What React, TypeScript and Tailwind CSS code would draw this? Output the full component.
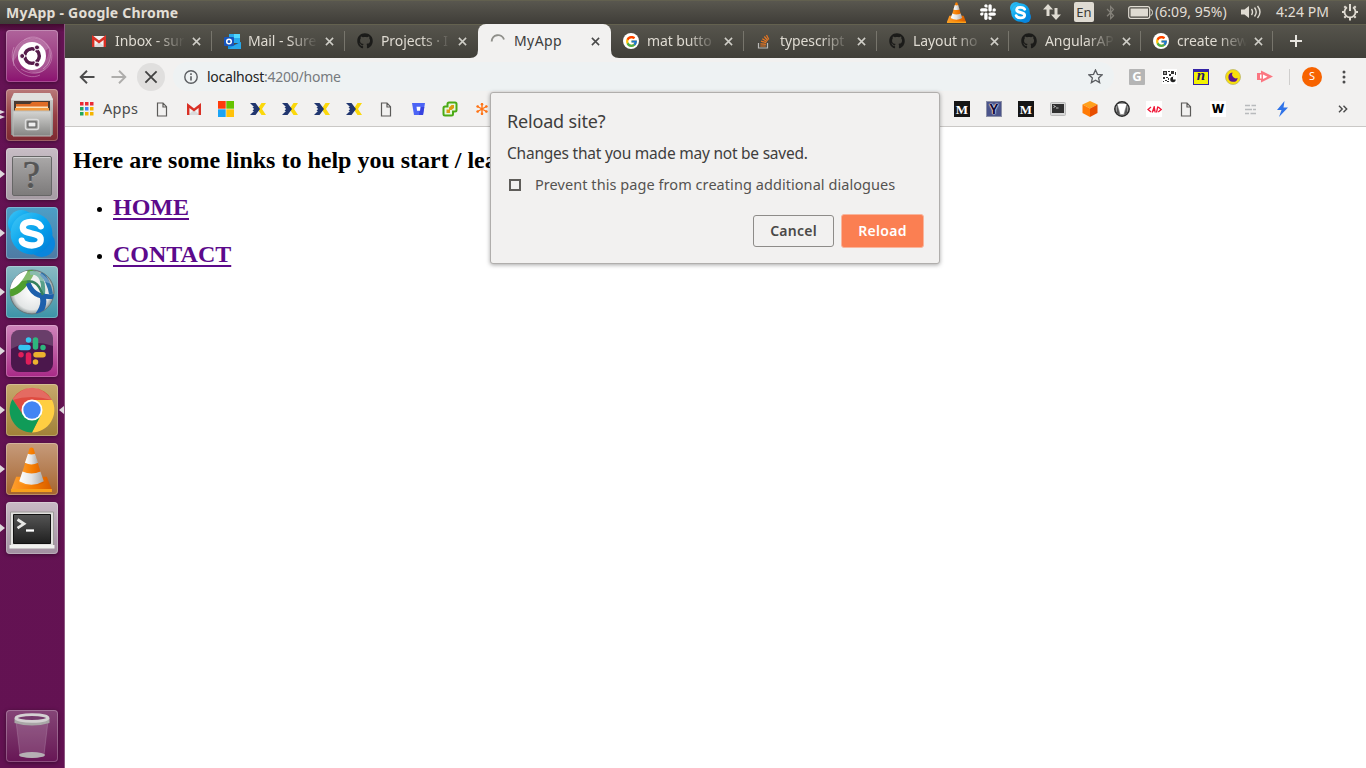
import React from "react";
import { FaGithub, FaSlack, FaBluetoothB } from "react-icons/fa";
import { FcGoogle } from "react-icons/fc";

type Kids = { children?: React.ReactNode };

const Vlc = ({ size = 20 }: { size?: number }) => (
  <svg width={size} height={size} viewBox="-2 0 44 44">
    <defs>
      <linearGradient id="cone" x1="0" x2="1">
        <stop offset="0" stopColor="#ffa030" />
        <stop offset=".55" stopColor="#f57c00" />
        <stop offset="1" stopColor="#d65c00" />
      </linearGradient>
      <linearGradient id="cloth" x1="0" x2="1">
        <stop offset="0" stopColor="#fff" />
        <stop offset=".5" stopColor="#e4e4e4" />
        <stop offset="1" stopColor="#a8a8a8" />
      </linearGradient>
    </defs>
    <path d="M5 29h30l5 13H0z" fill="url(#cone)" />
    <path d="M0 41h40v3H0z" fill="#f9a01c" />
    <path d="M18 1.500q2-2 4 0L32 35q-12 7-24 0z" fill="url(#cone)" />
    <path d="M16.500 6.500q3.500 1.500 7 0l2.900 9q-6.400 3-12.800 0z" fill="url(#cloth)" />
    <path d="M11.200 24q8.800 4 17.600 0L32 33.500q-12 7-24 0z" fill="url(#cloth)" />
  </svg>
);

const SkypeMark = ({ size = 20 }: { size?: number }) => (
  <svg width={size} height={size} viewBox="0 0 46 46">
    <defs>
      <linearGradient id="sky" x1="0" y1="0" x2="1" y2="1">
        <stop offset="0" stopColor="#44c8f5" />
        <stop offset=".5" stopColor="#08a4ee" />
        <stop offset="1" stopColor="#0078d4" />
      </linearGradient>
    </defs>
    <circle cx="13" cy="13" r="13" fill="url(#sky)" />
    <circle cx="33" cy="33" r="13" fill="#0a85dd" />
    <circle cx="23" cy="23" r="20.500" fill="url(#sky)" />
    <path d="M32 16C30 11 15 9 14.500 17c-.5 8 18 4 17.500 12 0 8-17 7-18.500 1" fill="none" stroke="#fff" strokeWidth="6.200" strokeLinecap="round" />
  </svg>
);

const Gmail = () => (
  <svg width="16" height="16" viewBox="0 0 16 16">
    <path d="M2 3h12v11H2z" fill="#f2f2f2" />
    <path d="M2 14l6-5 6 5z" fill="#dadada" />
    <path d="M2.200 14V4.500L8 9l5.800-4.500V14" fill="none" stroke="#d93025" strokeWidth="2.400" />
  </svg>
);

const Outlook = () => (
  <svg width="17" height="17" viewBox="0 0 17 17">
    <path d="M5 1h11v9H5z" fill="#28a8ea" />
    <path d="M10 1h6v4h-6z" fill="#50d9ff" />
    <path d="M4 9l6 3 7-3v7H4z" fill="#1490df" />
    <path d="M4 16l13-7v7z" fill="#28a8ea" />
    <rect x="0" y="4" width="10" height="9" rx="1" fill="#1755bd" />
    <circle cx="5" cy="8.500" r="2.300" fill="none" stroke="#fff" strokeWidth="1.500" />
  </svg>
);

const Octo = () => <FaGithub size={16} color="#1b1b19" />;

const Goog = () => (
  <span className="flex size-4 items-center justify-center rounded-full bg-white">
    <FcGoogle size={13} />
  </span>
);

const Stack = () => (
  <svg width="16" height="16" viewBox="0 0 16 16" fill="none">
    <path d="M2.500 10v5h9v-5" stroke="#bcbbb8" strokeWidth="1.200" />
    <path d="M4.300 13h5.500M4.400 10.800l5.500.6M5 8.200l5.300 1.500M6.300 5.700l4.700 2.800M8.300 3.500l3.500 4M10.500 2l2.300 4.500" stroke="#e87722" strokeWidth="1.200" />
  </svg>
);

const Spinner = () => (
  <svg width="16" height="16" viewBox="0 0 16 16" fill="none">
    <path d="M1.700 8.500A6.300 6.300 0 0 1 14 6.500" stroke="#8f8f8a" strokeWidth="1.900" />
  </svg>
);

const Cross = ({ size = 9, color = "#cfcec7", width = 1.7 }: { size?: number; color?: string; width?: number }) => (
  <svg width={size} height={size} viewBox="0 0 10 10" fill="none">
    <path d="M1 1l8 8M9 1l-8 8" stroke={color} strokeWidth={width} />
  </svg>
);

const tabs: { icon: React.ReactNode; label: string; width: string; sep?: boolean; active?: boolean }[] = [
  { icon: <Gmail />, label: "Inbox - sur", width: "w-[133px]", sep: true },
  { icon: <Outlook />, label: "Mail - Sure", width: "w-[133px]", sep: true },
  { icon: <Octo />, label: "Projects · I", width: "w-[133px]" },
  { icon: <Spinner />, label: "MyApp", width: "w-[133px]", active: true },
  { icon: <Goog />, label: "mat butto", width: "w-[133px]", sep: true },
  { icon: <Stack />, label: "typescript", width: "w-[133px]", sep: true },
  { icon: <Octo />, label: "Layout no", width: "w-[132px]", sep: true },
  { icon: <Octo />, label: "AngularAP", width: "w-[132px]", sep: true },
  { icon: <Goog />, label: "create new", width: "w-[132px]", sep: true },
];

const Tab = ({ icon, label, width, sep, active }: (typeof tabs)[number]) => (
  <div
    className={`relative flex h-[34px] shrink-0 items-center pl-[12px] ${width} ${
      active ? "rounded-t-[8px] bg-[#f2f1f0] text-[#3c3c3c]" : "text-[#dfdbd2]"
    }`}
  >
    {active && (
      <>
        <svg className="absolute bottom-0 -left-2" width="8" height="8" viewBox="0 0 8 8"><path d="M8 0v8H0q8 0 8-8" fill="#f2f1f0" /></svg>
        <svg className="absolute -right-2 bottom-0" width="8" height="8" viewBox="0 0 8 8"><path d="M0 0v8h8Q0 8 0 0" fill="#f2f1f0" /></svg>
      </>
    )}
    <span className="flex w-6 shrink-0">{icon}</span>
    <span
      className={
        active
          ? "w-[70px] pb-px text-[14px] tracking-[0.400px]"
          : "w-[70px] overflow-hidden pb-px text-[14px] whitespace-nowrap tracking-[-0.100px] [mask-image:linear-gradient(to_right,black_58%,transparent_100%)]"
      }
    >
      {label}
    </span>
    <span className="ml-[7px] flex"><Cross color={active ? "#4a4a4a" : "#cfcec7"} /></span>
    {sep && <span className="ml-auto h-5 w-px bg-[#77756c]" />}
  </div>
);

const Slot = ({ children }: Kids) => <span className="flex w-8 shrink-0 items-center justify-center">{children}</span>;

const Page = () => (
  <svg width="12" height="15" viewBox="0 0 12 15" fill="none">
    <path d="M1.500 1h5.500l3.500 3.700V14h-9zM7 1v4h3.500" stroke="#5c5b59" strokeWidth="1.200" />
  </svg>
);

const Chevrons = () => (
  <svg width="16" height="12" viewBox="0 0 16 12">
    <path d="M11.500 0H16l-4 6 4 6h-4.500L7.500 6z" fill="#fbd80b" />
    <path d="M0 0h5.500L10 6l-4.500 6H0l4-4H2.500l1.500-2-1.500-2H4z" fill="#21366f" />
  </svg>
);

const Medium = () => (
  <span className="flex size-4 items-center justify-center bg-[#151515] font-['Liberation_Serif',serif] text-[13px] leading-none font-bold text-white">M</span>
);

const WindowsMark = () => (
  <svg width="16" height="16" viewBox="0 0 16 16">
    <path d="M0 0h7.700v7.700H0z" fill="#ff3b0b" />
    <path d="M8.300 0H16v7.700H8.300z" fill="#66c300" />
    <path d="M0 8.300h7.700V16H0z" fill="#1aa3f5" />
    <path d="M8.300 8.300H16V16H8.300z" fill="#ffc20a" />
  </svg>
);

const Bookmarks = () => (
  <div className="flex h-[35px] items-center border-b border-[#cac8c6] pl-[15px]">
    <svg width="14" height="14" viewBox="0 0 14 14">
      {["#ea2a35", "#ea2a35", "#ea2a35", "#21a65b", "#4285f4", "#f4b400", "#21a65b", "#f4b400", "#f4b400"].map((c, i) => (
        <rect key={i} x={(i % 3) * 5} y={Math.floor(i / 3) * 5} width="3.500" height="3.500" fill={c} />
      ))}
    </svg>
    <span className="ml-[9px] w-[43px] pb-px text-[14.500px] tracking-[0.300px] text-[#4a4a4a]">Apps</span>
    <Slot><Page /></Slot>
    <Slot><Gmail /></Slot>
    <Slot><WindowsMark /></Slot>
    <Slot><Chevrons /></Slot>
    <Slot><Chevrons /></Slot>
    <Slot><Chevrons /></Slot>
    <Slot><Chevrons /></Slot>
    <Slot><Page /></Slot>
    <Slot>
      <svg width="13" height="12" viewBox="0 0 13 12"><path d="M0 0h13l-2 12H2z" fill="#4c64f5" /><path d="M8 4h4.300L11 12H7z" fill="#3742df" /><path d="M4.500 3.800h4L8 7.700H5z" fill="#fff" /></svg>
    </Slot>
    <Slot>
      <svg width="16" height="16" viewBox="0 0 16 16"><path d="M7 1.500h6q1.500 0 1.500 1.500v6q0 1.500-1.500 1.500h-2V13q0 1.500-1.500 1.500H3Q1.500 14.500 1.500 13V7Q1.500 5.500 3 5.500h2.500V3q0-1.500 1.500-1.500z" fill="#e8f7df" stroke="#4aaa15" strokeWidth="2" /><path d="M4.500 12V8.500H7V6.500L9.500 4h2.500v3L9.500 9H8v3z" fill="#dc9b13" /></svg>
    </Slot>
    <Slot>
      <svg width="12" height="12" viewBox="0 0 12 12" stroke="#ff7416" strokeWidth="1.400"><path d="M6 0v12M.8 3l10.400 6M.8 9l10.400-6" /><g fill="#ff7416" stroke="none"><circle cx="6" cy="1.300" r="1.300" /><circle cx="6" cy="10.700" r="1.300" /><circle cx="1.700" cy="3.500" r="1.300" /><circle cx="10.300" cy="3.500" r="1.300" /><circle cx="1.700" cy="8.500" r="1.300" /><circle cx="10.300" cy="8.500" r="1.300" /></g></svg>
    </Slot>
    <span className="w-[448px] shrink-0" />
    <Slot><Medium /></Slot>
    <Slot>
      <span className="flex size-4 items-center justify-center border border-[#8c90a7] bg-[#4b548b] text-[14px] leading-none font-bold text-[#120d3a] [text-shadow:0_0_1px_#fff,0_0_1px_#fff,0_0_2px_#fff]">Y</span>
    </Slot>
    <Slot><Medium /></Slot>
    <Slot>
      <svg width="16" height="14" viewBox="0 0 16 14"><rect x=".5" y=".5" width="15" height="13" rx="1" fill="#d7d7d7" stroke="#bbb" /><path d="M2 2h12v9H2z" fill="#303030" /><path d="M3.500 3.500l2 1-2 1M6 6h2.500" stroke="#ddd" strokeWidth=".8" fill="none" /></svg>
    </Slot>
    <Slot>
      <svg width="16" height="16" viewBox="0 0 16 16"><path d="M8 0l7.500 3.500L8 7.500.5 3.500z" fill="#ffa01c" /><path d="M.5 3.500L8 7.500V16L.5 12z" fill="#ff7a05" /><path d="M15.500 3.500L8 7.500V16l7.500-4z" fill="#e84e00" /></svg>
    </Slot>
    <Slot>
      <svg width="16" height="16" viewBox="0 0 16 16"><circle cx="8" cy="8" r="7.200" fill="#9b9b9b" stroke="#2a2a2a" strokeWidth="1.500" /><path d="M3.500 3h9L9.500 13h-3z" fill="#fff" /><path d="M3 3.500v9l3 1.500zM13 3.500v9l-3 1.500z" fill="#555" /></svg>
    </Slot>
    <Slot>
      <span className="flex size-4 items-center justify-center bg-white">
        <svg width="15" height="7" viewBox="0 0 15 7" fill="none" stroke="#f01838" strokeWidth="1.300"><path d="M4 1L1 3.500 4 6M5.200 6.500L7.200.8l1 5.700M6 4.500h2.500M10.800.5L9.500 6.500M11.200 1l3 2.500-3 2.500" /></svg>
      </span>
    </Slot>
    <Slot><Page /></Slot>
    <Slot><span className="flex size-4 items-center justify-center bg-white text-[12px] leading-none font-black text-black">W</span></Slot>
    <Slot>
      <svg width="11" height="11" viewBox="0 0 11 11" stroke="#b8babc" strokeWidth="1.700"><path d="M0 1.500h5M6.500 1.500H11M0 5.500h7M8 5.500h3M0 9.500h4M5.500 9.500H11" /></svg>
    </Slot>
    <Slot>
      <svg width="13" height="16" viewBox="0 0 13 16"><path d="M8.500 0L1 9h4.500L3 16l9-9.500H7.500z" fill="#2f73e8" /></svg>
    </Slot>
    <svg className="ml-10" width="10" height="8" viewBox="0 0 10 8" fill="none" stroke="#494949" strokeWidth="1.400"><path d="M1 .8L4.200 4 1 7.200M5.500.8L8.700 4 5.500 7.200" /></svg>
  </div>
);

const Toolbar = () => (
  <div className="flex h-[34px] items-center pt-[3px]">
    <span className="flex w-8 justify-end pr-[2px]">
      <svg width="16" height="14" viewBox="0 0 16 14" fill="none" stroke="#4c4c4c" strokeWidth="1.900"><path d="M15.500 7H2M8 .8L1.700 7 8 13.200" /></svg>
    </span>
    <span className="flex w-8 justify-end pr-[2px]">
      <svg width="16" height="14" viewBox="0 0 16 14" fill="none" stroke="#aeadab" strokeWidth="1.900"><path d="M.5 7H14M8 .8L14.300 7 8 13.200" /></svg>
    </span>
    <span className="ml-2 flex size-7 items-center justify-center rounded-full bg-[#e0dfde]"><Cross size={14} color="#414141" width={1.3} /></span>
    <div className="ml-2 flex h-[29px] w-[941px] items-center rounded-full bg-[#eef2f3] pr-[11px] pl-[11px]">
      <svg width="14" height="14" viewBox="0 0 14 14" fill="none" stroke="#5b5e62" strokeWidth="1.400"><circle cx="7" cy="7" r="6.200" /><path d="M7 6.200v4.300M7 3.300v1.600" strokeWidth="1.600" /></svg>
      <span className="ml-[9px] text-[14px] tracking-[-0.240px] text-[#767a7e]"><span className="text-[#222]">localhost</span>:4200/home</span>
      <svg className="ml-auto" width="15" height="15" viewBox="0 0 16 16" fill="none" stroke="#5b5e62" strokeWidth="1.400"><path d="M8 1l2.100 4.700 5 .5-3.800 3.400 1.100 5L8 12l-4.400 2.600 1.100-5L.9 6.200l5-.5z" /></svg>
    </div>
    <div className="ml-[7px] flex items-center">
      <Slot><span className="flex size-4 items-center justify-center rounded-[1px] bg-[#b5b5b5] text-[13px] leading-none font-bold text-white">G</span></Slot>
      <Slot>
        <svg width="15" height="15" viewBox="0 0 15 15"><path d="M0 0h15v15H0z" fill="#fff" /><path d="M1 2h4v4H1zM6 2h2v1H6zM9 2h3v3H9zM7 5h2v2H7zM13 3h1v3h-1zM1 8h2v2H1zM4 8h2v1H4zM6 9h1v2H6zM3 11h2v1H3zM1 12h1v1H1zM5 12h2v1H5z" fill="#333" /><path d="M2.300 3.300h1.400v1.400H2.300z" fill="#fff" /><circle cx="11" cy="10.500" r="2.700" fill="#222" /><path d="M11 10.500V8h3v2.500z" fill="#fff" /></svg>
      </Slot>
      <Slot>
        <span className="flex size-4 items-center justify-center border-[1.500px] border-t-[3px] border-[#3423a6] bg-[#f2f205] font-['Liberation_Serif',serif] text-[15px] leading-none font-bold text-[#241769] italic"><span className="-mt-1">n</span></span>
      </Slot>
      <Slot>
        <svg width="16" height="16" viewBox="0 0 16 16"><circle cx="8" cy="8" r="7.500" fill="#f8df0b" stroke="#bdb76a" strokeWidth=".8" /><path d="M7.500 3.500A4.700 4.700 0 1 0 12.700 9 4 4 0 0 1 7.500 3.500" fill="#5b1690" /></svg>
      </Slot>
      <Slot>
        <svg width="16" height="13" viewBox="0 0 16 13"><path d="M0 3h4V.5L16 6.500 4 12.500V10H0z" fill="#fb7681" /><path d="M6 4.500v4.500l4.500-2.300zM3 4.500h1.500v4H3z" fill="#fff" /></svg>
      </Slot>
      <span className="ml-2 h-4 w-px bg-[#cfcecd]" />
      <span className="ml-3 flex size-5 items-center justify-center rounded-full bg-[#f76300] text-[11px] text-white">S</span>
      <svg className="ml-5" width="4" height="14" viewBox="0 0 4 14" fill="#4c4c4c"><circle cx="2" cy="2" r="1.500" /><circle cx="2" cy="7" r="1.500" /><circle cx="2" cy="12" r="1.500" /></svg>
    </div>
  </div>
);

const TopBar = () => (
  <div className="flex h-6 shrink-0 items-center bg-linear-to-b from-[#5a5850] to-[#3f3d38] pl-[6px] text-[#e2ded5] shadow-[inset_0_1px_0_#62604f]">
    <span className="w-[934px] text-[14px] tracking-[0.220px] font-bold">MyApp - Google Chrome</span>
    <Slot><Vlc size={21} /></Slot>
    <Slot><FaSlack size={18} color="#fff" /></Slot>
    <Slot><SkypeMark size={21} /></Slot>
    <Slot>
      <svg width="18" height="16" viewBox="0 0 18 16" fill="#dfdbd2"><path d="M5 0l5 5.500H6.500V12h-3V5.500H0zM13 16l5-5.500h-3.500V4h-3v6.500H8z" /></svg>
    </Slot>
    <span className="ml-[6px] flex h-5 w-5 items-center justify-center rounded-[2px] bg-[#dfdbd2] text-[13px] leading-none text-[#3c3b37]">En</span>
    <span className="flex w-8 justify-center"><FaBluetoothB size={15} color="#85827a" /></span>
    <svg className="ml-[2px] shrink-0" width="25" height="13" viewBox="0 0 25 13"><rect x=".7" y=".7" width="21" height="11.600" rx="2" fill="none" stroke="#dfdbd2" strokeWidth="1.200" /><rect x="2.500" y="2.500" width="17.500" height="8" fill="#dfdbd2" /><path d="M22.500 3.500q2 0 2 3t-2 3" fill="none" stroke="#dfdbd2" /></svg>
    <span className="ml-[2px] w-[86px] shrink-0 pb-px text-[14px] tracking-[0.050px] whitespace-nowrap">(6:09, 95%)</span>
    <svg className="shrink-0" width="21" height="16" viewBox="0 0 21 16" fill="none" stroke="#dfdbd2" strokeWidth="1.400"><path d="M0 5.500h3.500L8 2v12l-4.500-3.500H0z" fill="#dfdbd2" stroke="none" /><path d="M10.500 5q2 3 0 6M13.500 3.500q3.500 4.500 0 9M16.500 2q5 6 0 12" /></svg>
    <span className="ml-[14px] w-[65px] shrink-0 pb-px text-[14px] tracking-[0.050px] whitespace-nowrap">4:24 PM</span>
    <svg className="shrink-0" width="18" height="18" viewBox="0 0 18 18" fill="none" stroke="#dfdbd2">
      <path d="M6 4.300a5.500 5.500 0 1 0 6 0" strokeWidth="1.800" /><path d="M9 1v7M1 9h2M15 9h2M9 15v2.500M3.300 3.300l1.500 1.500M14.700 3.300l-1.500 1.500M3.300 14.700l1.500-1.500M14.700 14.700l-1.500-1.500" strokeWidth="2" />
    </svg>
  </div>
);

const Ubuntu = () => (
  <svg width="52" height="52" viewBox="0 0 52 52" fill="none">
    <path d="M8 36C2 8 32 0 43 17M43 17c10 15-8 35-28 22M18 10C35-2 56 25 37 39M8 17C0 36 20 52 34 45" stroke="#ddb0d0" strokeOpacity=".45" strokeWidth="1" />
    <path d="M7 32C5 8 34 2 43 18L34 25 15 20z" fill="#fff" fillOpacity=".18" />
    <path d="M18 38l19-5q6-5 6-14 5 14-7 23-8 4-18-4" fill="#fff" fillOpacity=".18" />
    <circle cx="26" cy="26" r="14" fill="#fff" />
    <circle cx="26" cy="26" r="7.300" stroke="#561c4b" strokeWidth="3.500" />
    <path d="M26 26H14M26 26l6-11M26 26l6 11" stroke="#fff" strokeWidth="1.200" />
    <circle cx="26" cy="26" r="5.200" fill="#fff" />
    <g fill="#561c4b" stroke="#fff"><circle cx="16.200" cy="26" r="2.500" /><circle cx="31" cy="17.400" r="2.500" /><circle cx="31" cy="34.600" r="2.500" /></g>
  </svg>
);

const Files = () => (
  <svg width="52" height="52" viewBox="0 0 52 52">
    <defs><linearGradient id="cab" x2="0" y2="1"><stop stopColor="#d5d5d3" /><stop offset="1" stopColor="#858583" /></linearGradient></defs>
    <path d="M8 4h36l3 6v36H5V10z" fill="url(#cab)" />
    <path d="M8 4h36l3 7H5z" fill="#e1e1df" />
    <path d="M8 12h36v12H8z" fill="#4a3a30" />
    <path d="M10 15h14l2-2h16v9H10z" fill="#df6c25" /><path d="M10 17.500h32v1.500H10z" fill="#fbe3bc" /><path d="M9 19h34v3H9z" fill="#f39b3e" />
    <path d="M7 22h38v25H7z" fill="url(#cab)" stroke="#bcbcba" />
    <rect x="19.500" y="30.500" width="13" height="10" rx="2" fill="#9b9b99" stroke="#ddd" strokeWidth="1.500" /><rect x="22" y="33" width="8" height="5" fill="#eee" stroke="#555" />
  </svg>
);

const Unknown = () => (
  <span className="mt-1 flex size-10 items-center justify-center rounded-[2px] border border-[#666] bg-linear-to-b from-[#aaa8a8] to-[#7d7b7b] pb-1 font-['Liberation_Serif',serif] text-[39px] leading-none text-[#555] shadow-[inset_0_1px_0_#d0d0d0] [-webkit-text-stroke:0.600px_#555] [text-shadow:0_1px_0_#b9b9b9]">?</span>
);

const AnyConnect = () => (
  <svg width="48" height="48" viewBox="0 0 48 48" fill="none">
    <defs><radialGradient id="ball"><stop stopColor="#fff" /><stop offset=".8" stopColor="#e2e5e5" /><stop offset="1" stopColor="#8d9999" /></radialGradient><clipPath id="ballClip"><circle cx="24" cy="24" r="22" /></clipPath></defs>
    <circle cx="24" cy="24" r="22" fill="url(#ball)" stroke="#687578" />
    <g clipPath="url(#ballClip)">
      <path d="M0 24C10 24 17 17 22 4L10 0 0 12z" fill="#fff" />
      <path d="M0 25C10 25 18 15 24 2" stroke="#4f9e2f" strokeWidth="7" />
      <path d="M22 5C34 3 36 16 35 26" stroke="#57a08a" strokeWidth="4" />
      <path d="M34 27q4 9-4 20" stroke="#1d60ac" strokeWidth="6" />
      <path d="M20 15c5 13 14 15 30 13" stroke="#1d60ac" strokeWidth="5" />
      <path d="M19 14q7-2 12 5l4 8" stroke="#34805e" strokeWidth="2.500" />
      <path d="M33 5q8 8 10 21" stroke="#2c72a8" strokeWidth="4" />
    </g>
    <path d="M5 16Q12 3 24 3t19 13Q24 8 5 16" fill="#fff" fillOpacity=".3" />
  </svg>
);

const SlackTile = () => (
  <svg width="42" height="42" viewBox="0 0 42 42">
    <rect width="42" height="42" rx="8" fill="#4b174c" />
    <path d="M8 0h26q8 0 8 8v8Q20 8 0 19V8Q0 0 8 0" fill="#fff" fillOpacity=".17" />
    <g strokeWidth="5.500" strokeLinecap="round"><path d="M10 17.500h7M17.500 10h.01" stroke="#36c5f0" /><path d="M24.500 10v7M32 17.500h.01" stroke="#2eb67d" /><path d="M32 24.700h-7M24.500 32h.01" stroke="#ecb22e" /><path d="M17.500 32v-7M10 24.700h.01" stroke="#e01e5a" /></g>
  </svg>
);

const ChromeMark = () => (
  <svg width="46" height="46" viewBox="0 0 46 46">
    <path d="M3.500 12A22.500 22.500 0 0 1 43 13H23L14 28z" fill="#df4b40" />
    <path d="M43 13A22.500 22.500 0 0 1 23 45.500L32 27 30 16 23 13z" fill="#ffce42" />
    <path d="M3.500 12A22.500 22.500 0 0 0 23 45.500L32 28 23 31 14 28z" fill="#109b58" />
    <circle cx="23" cy="23" r="10.500" fill="#fff" /><circle cx="23" cy="23" r="8.700" fill="#4285f4" />
    <path d="M3 13Q23-12 43 13 22 7 3 13" fill="#fff" fillOpacity=".18" />
  </svg>
);

const Terminal = () => (
  <svg className="mt-1" width="46" height="38" viewBox="0 0 46 38" fill="none">
    <defs><linearGradient id="scr" x2="0" y2="1"><stop stopColor="#555" /><stop offset="1" stopColor="#1f1f1f" /></linearGradient></defs>
    <path d="M1.500 1h43v36h-43z" fill="#e2e1df" stroke="#9c9a98" /><path d="M.5 34h45v3.500H.5z" fill="#f1f1ef" />
    <path d="M4.500 3.500h37v29h-37z" fill="url(#scr)" stroke="#111" />
    <path d="M8.500 8.500l6.500 4.300-6.500 4.300" stroke="#e7e7e5" strokeWidth="2.800" /><path d="M17 19.500h8" stroke="#fff" strokeWidth="2.300" />
  </svg>
);

const Trash = () => (
  <svg width="44" height="48" viewBox="0 0 44 48">
    <path d="M6 9h32l-4 34q-12 5-24 0z" fill="#fff" fillOpacity=".14" stroke="#b58faf" strokeOpacity=".35" />
    <ellipse cx="22" cy="43" rx="13" ry="3" fill="#b6b0b4" />
    <path d="M4.500 6v5q17.500 5 35 0V6z" fill="#a9a7a7" />
    <ellipse cx="22" cy="6" rx="16" ry="3.300" fill="#74396a" stroke="#d4d1d2" strokeWidth="2.800" />
  </svg>
);

const Pointer = () => (
  <svg className="absolute top-[22px] -left-[6px]" width="5" height="8" viewBox="0 0 5 8"><path d="M0 0l5 4-5 4z" fill="#ded8dc" /></svg>
);

const tile =
  "relative flex size-[52px] shrink-0 items-center justify-center rounded-[4px] shadow-[inset_0_0_0_1px_rgba(255,255,255,0.25),0_1px_4px_rgba(0,0,0,0.4)]";

const Launcher = () => (
  <div className="flex w-[65px] shrink-0 flex-col items-center gap-[7px] border-r border-[#8d5781] bg-linear-to-b from-[#43092f] via-[#651354] via-[8px] to-[#631252] pt-[6px] pr-[1px] pb-[6px]">
    <div className={`${tile} bg-linear-to-b from-[#af649b] to-[#8b0f70]`}><Ubuntu /></div>
    <div className={`${tile} bg-linear-to-b from-[#b97a7a] via-[#963f45] to-[#7d2931]`}>
      <svg className="absolute top-[21px] -left-[6px]" width="5" height="9" viewBox="0 0 5 9"><path d="M0 0l5 2-5 2zM0 5l5 2-5 2z" fill="#ded8dc" /></svg>
      <Files />
    </div>
    <div className={`${tile} bg-linear-to-b from-[#c8bdc5] to-[#a69ca4]`}><Pointer /><Unknown /></div>
    <div className={`${tile} bg-linear-to-b from-[#4c9fc7] to-[#4e7aa3]`}><Pointer /><SkypeMark size={47} /></div>
    <div className={`${tile} bg-linear-to-b from-[#8abac4] to-[#3b94a8]`}><Pointer /><AnyConnect /></div>
    <div className={`${tile} bg-linear-to-b from-[#cf84bb] to-[#a82887]`}><Pointer /><SlackTile /></div>
    <div className={`${tile} bg-linear-to-b from-[#c7a96d] to-[#a18137]`}>
      <Pointer /><ChromeMark />
      <svg className="absolute top-[22px] -right-[6px]" width="5" height="8" viewBox="0 0 5 8"><path d="M5 0L0 4l5 4z" fill="#ded8dc" /></svg>
    </div>
    <div className={`${tile} bg-linear-to-b from-[#c69b7b] to-[#a5652c]`}><Pointer /><Vlc size={45} /></div>
    <div className={`${tile} bg-linear-to-b from-[#c9bac5] to-[#a190a0]`}><Pointer /><Terminal /></div>
    <div className={`${tile} mt-auto bg-linear-to-b from-[#854577] to-[#671555]`}><Trash /></div>
  </div>
);

const LinkItem = ({ children }: Kids) => (
  <li className="flex h-[47px] items-start">
    <span className="mt-[13px] mr-[11px] ml-[24px] size-[5px] rounded-full bg-black" />
    <a className="text-[24px] leading-[27px] font-bold text-[#5c0a8b] underline decoration-2 underline-offset-[3px]">{children}</a>
  </li>
);

const Dialog = () => (
  <div className="absolute top-[92px] left-[490px] flex h-[172px] w-[450px] flex-col rounded-[3px] border border-[#b0aeac] bg-[#f2f1f0] px-4 text-[#3f3e3d] shadow-[0_1px_4px_rgba(0,0,0,0.35)]">
    <h1 className="mt-[16px] text-[18px] leading-6 tracking-[-0.180px] whitespace-nowrap">Reload site?</h1>
    <p className="mt-2 text-[15.500px] leading-6 tracking-[-0.230px] whitespace-nowrap">Changes that you made may not be saved.</p>
    <label className="mt-2 flex h-6 items-center text-[14.500px] tracking-[0.060px] whitespace-nowrap text-[#555350]">
      <span className="mr-[14px] ml-[2px] size-3 border-2 border-[#5f5d5a]" />
      Prevent this page from creating additional dialogues
    </label>
    <div className="mt-[17px] flex items-center justify-end gap-[7px]">
      <button className="h-8 w-[81px] rounded-[3px] border border-[#8e8c89] pb-px text-[14px] font-semibold tracking-[0.250px] text-[#4b4947]">Cancel</button>
      <button className="-mr-px h-[34px] w-[83px] rounded-[3px] border border-[#f9b59c] bg-[#fb7f52] pb-px text-[14px] font-semibold tracking-[0.300px] text-white">Reload</button>
    </div>
  </div>
);

export default function App() {
  return (
    <div className="relative flex h-[768px] w-[1366px] flex-col overflow-hidden bg-white font-['Noto_Sans',sans-serif]">
      <TopBar />
      <div className="flex min-h-0 flex-1">
        <Launcher />
        <div className="flex w-[1301px] flex-col">
          <div className="flex h-[34px] shrink-0 items-center bg-linear-to-b from-[#57554d] to-[#403f39] pl-[14px] shadow-[inset_0_1px_0_#63614f]">
            {tabs.map((t) => <Tab key={t.label} {...t} />)}
            <svg className="ml-[17px]" width="12" height="12" viewBox="0 0 12 12" stroke="#e7e5df" strokeWidth="2"><path d="M6 0v12M0 6h12" /></svg>
          </div>
          <div className="bg-[#f2f1f0]"><Toolbar /><Bookmarks /></div>
          <main className="pt-5 pl-2 font-['Liberation_Serif',serif] text-black">
            <h2 className="mb-5 text-[24px] leading-[27px] font-bold whitespace-nowrap">Here are some links to help you start / lea</h2>
            <ul>
              <LinkItem>HOME</LinkItem>
              <LinkItem>CONTACT</LinkItem>
            </ul>
          </main>
        </div>
      </div>
      <Dialog />
    </div>
  );
}
